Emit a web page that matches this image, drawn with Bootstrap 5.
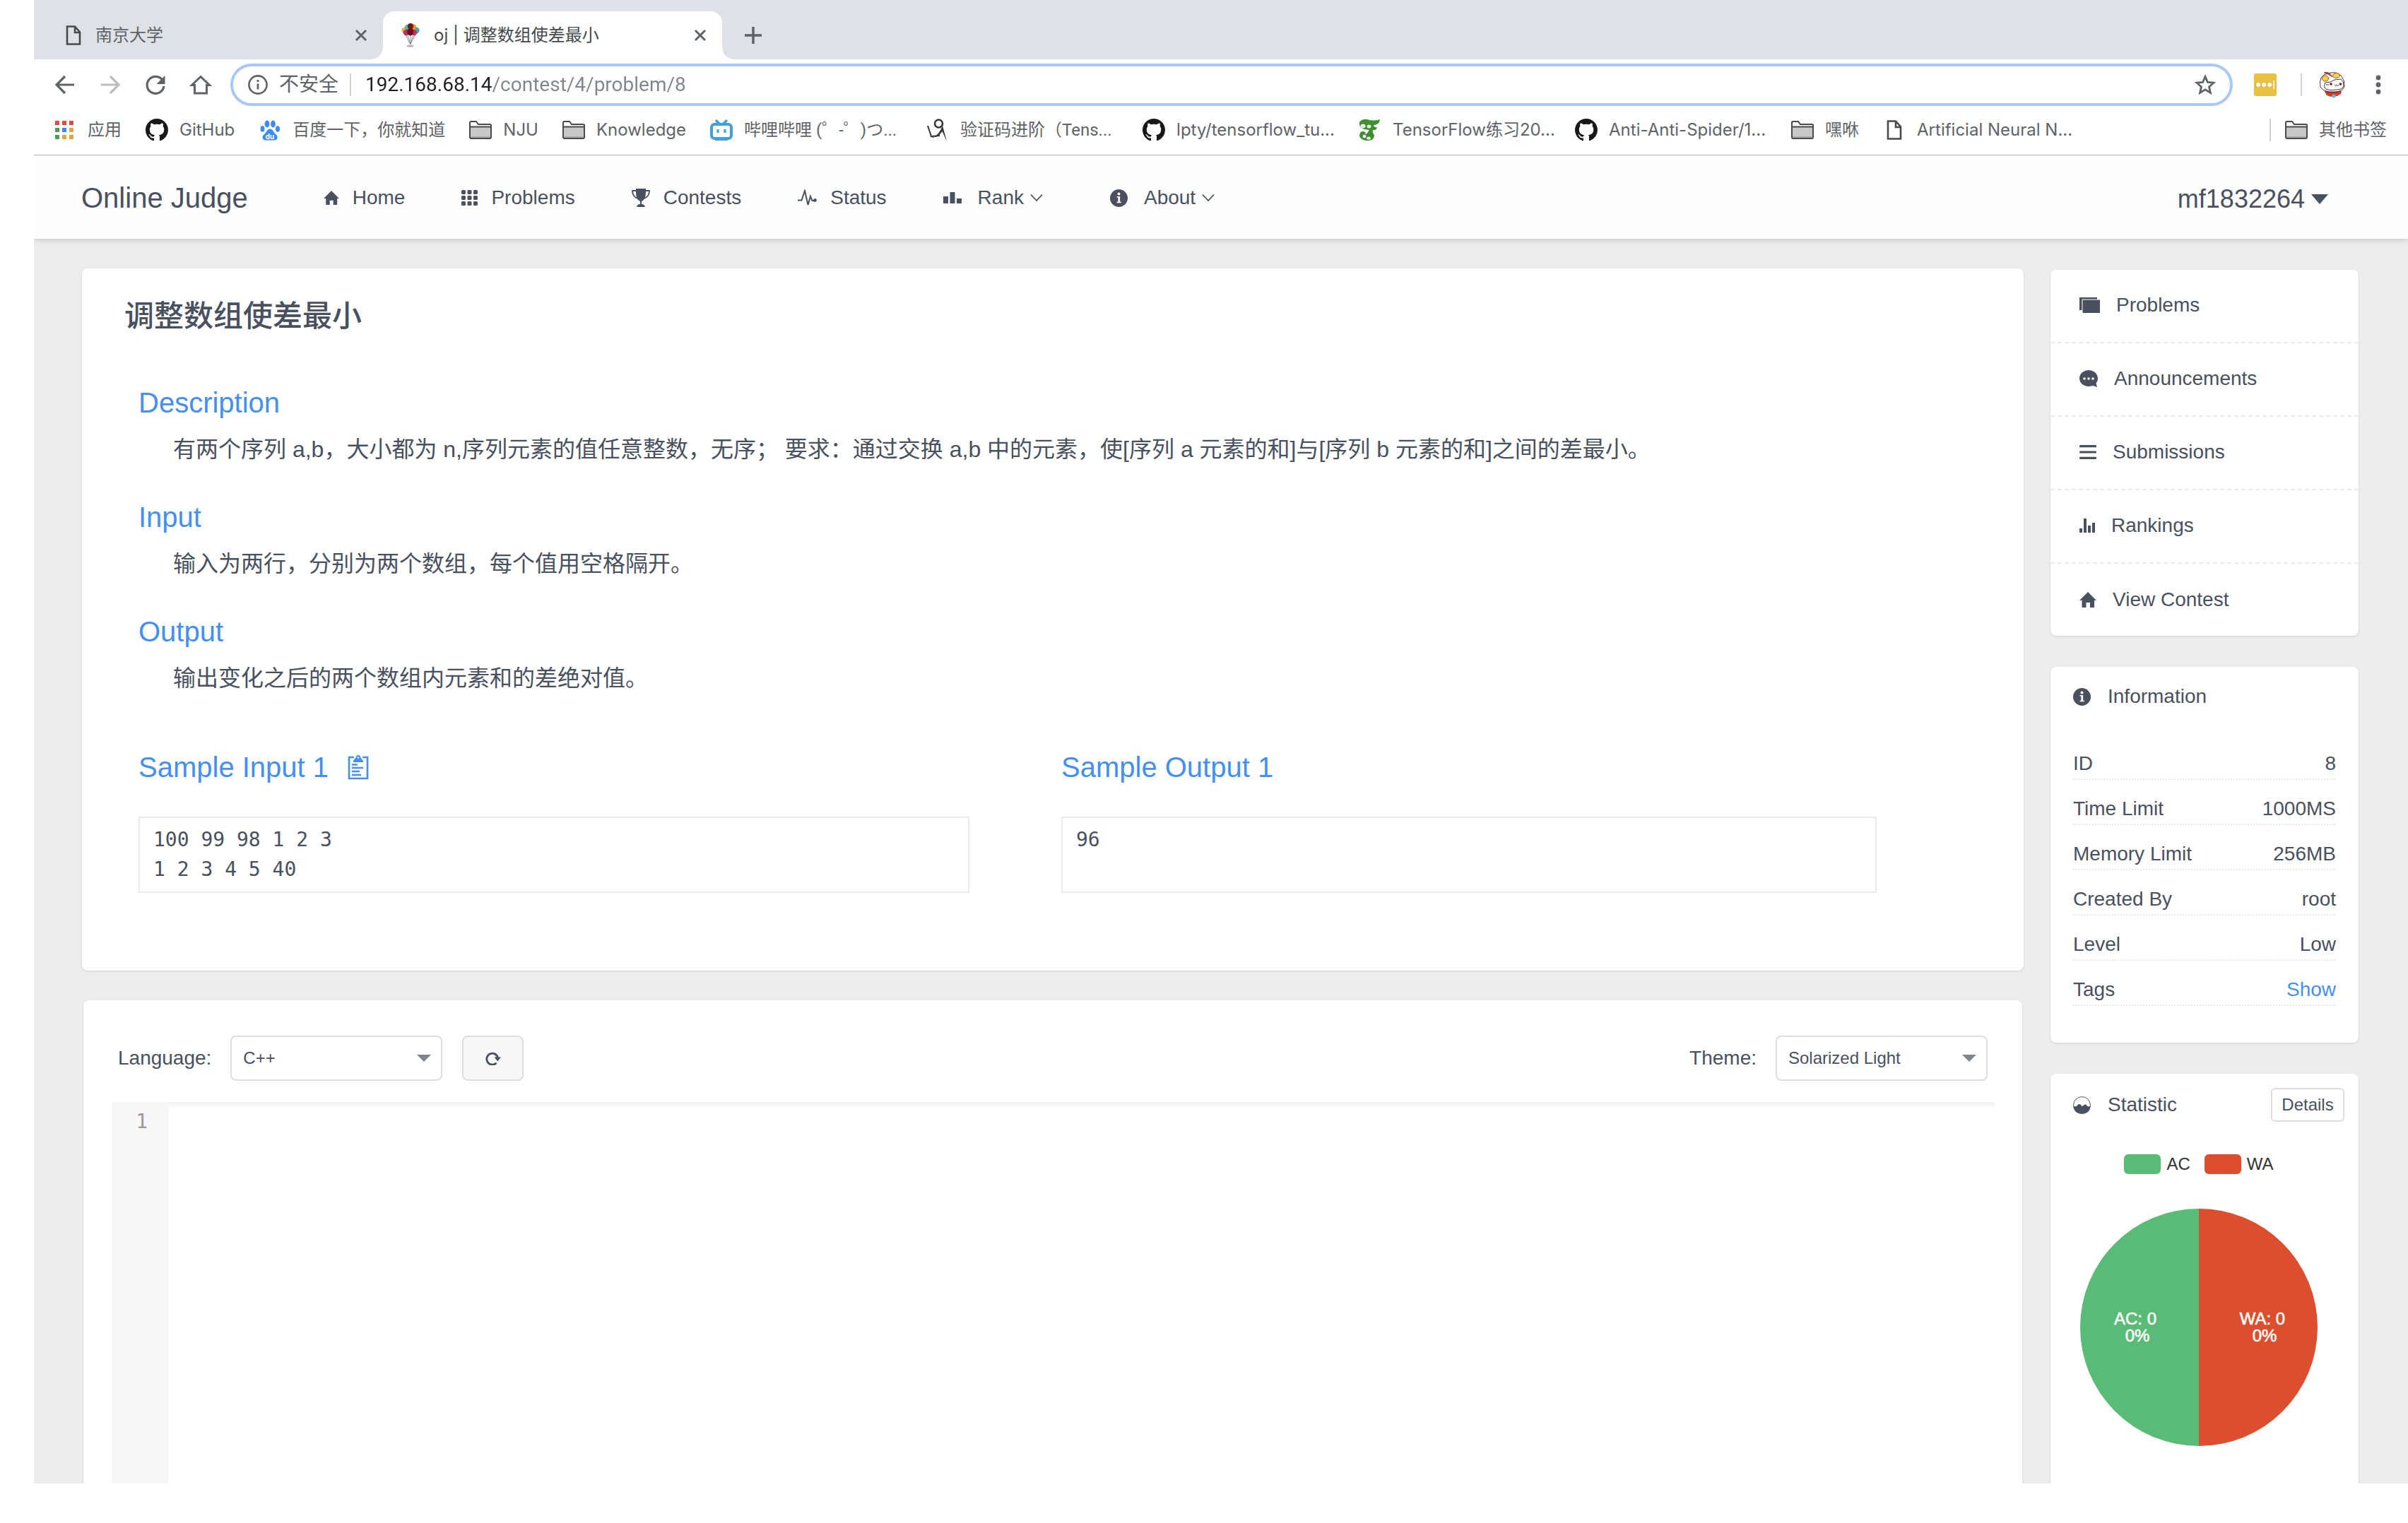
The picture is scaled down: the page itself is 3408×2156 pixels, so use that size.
<!DOCTYPE html>
<html lang="zh-CN">
<head>
<meta charset="utf-8">
<meta name="viewport" content="width=device-width, initial-scale=1">
<title>oj | 调整数组使差最小</title>
<link rel="stylesheet" href="https://cdn.jsdelivr.net/npm/bootstrap@5.3.0/dist/css/bootstrap.min.css">
<style>
  :root { --ink: #495060; --blue: #448ff0; --line: #e9eaec; --chrome: #5f6368; }
  body { font-family: "Liberation Sans", "Noto Sans CJK SC", sans-serif; font-size: 28px; line-height: 42px; color: var(--ink); background: #fff; }
  a, a:hover { color: inherit; text-decoration: none; }
  svg { display: block; flex: none; }
  .shell { height: calc(100vh - 56px); margin-left: 48px; overflow: hidden; }

  /* browser frame */
  .chrome-ui { font-family: Roboto, "Noto Sans CJK SC", sans-serif; color: var(--chrome); }
  .chrome-ui button, .app button { background: none; border: 0; padding: 0; color: inherit; }
  .tabstrip { height: 84px; background: #dee1e6; padding-top: 16px; font-size: 24px; line-height: 36px; }
  .tab-item { height: 68px; padding: 0 22px 0 26px; gap: 20px; }
  .tab-idle { width: 494px; padding-left: 45px; }
  .tab-live { width: 480px; background: #fff; border-radius: 16px 16px 0 0; position: relative; color: #45494d; }
  .tab-live::before, .tab-live::after { content: ""; position: absolute; bottom: 0; width: 16px; height: 16px; }
  .tab-live::before { left: -16px; background: radial-gradient(circle at 0 0, transparent 15px, #fff 16px); }
  .tab-live::after { right: -16px; background: radial-gradient(circle at 100% 0, transparent 15px, #fff 16px); }
  .toolbar { height: 72px; padding: 0 38px 0 28px; }
  .tool-keys { gap: 32px; margin-right: 26px; }
  .omnibox { height: 60px; border: 4px solid #a8c7fa; border-radius: 30px; padding: 0 20px 0 21px; }
  .omnibox input { border: 0; outline: 0; padding: 0; min-width: 0; color: transparent;
    background: linear-gradient(90deg, #202124 179px, #80868b 179px); -webkit-background-clip: text; background-clip: text; }
  .vrule { width: 2px; height: 32px; background: #cfd1d4; flex: none; }
  .tool-menu { margin-left: 42px; }
  .bookmarks { height: 64px; padding: 0 30px 7px 28px; border-bottom: 1px solid #b4b4b4; font-size: 24px; line-height: 36px; gap: 34px; white-space: nowrap; }
  .latin { font-family: Inter, "Noto Sans CJK SC", sans-serif; }
  .bookmarks a, .bookmark-rest { display: flex; align-items: center; gap: 16px; }
  .bookmark-rest { gap: 20px; }
  .clip { width: 224px; }

  /* site header */
  .topnav { height: 118px; background: #fdfdfd; box-shadow: 0 2px 8px rgba(0, 0, 0, .16); padding: 2px 112px 0 67px; position: relative; z-index: 1; }
  .brand { font-size: 40px; line-height: 60px; margin-right: 107px; }
  .topnav nav { gap: 80px; }
  .topnav nav > * { display: flex; align-items: center; gap: 19px; }
  .user-name { font-size: 36px; line-height: 54px; }
  .carets { margin-left: -10px; margin-right: 15px; }

  .app { background: #ededed; }
  .page { padding: 42px 70px 0 68px; gap: 38px; flex: 1; min-height: 0; }
  .pane { background: #fff; border-radius: 8px; box-shadow: 0 1px 3px rgba(0, 0, 0, .12); }
  .pane.pane-open { border-radius: 8px 8px 0 0; }
  .problem { padding: 41px 208px 110px 80px; }
  .problem h1 { font-size: 42px; line-height: 54px; font-weight: 500; margin: 0 0 65px -20px; }
  .problem h2 { font-size: 40px; line-height: 60px; font-weight: 400; color: var(--blue); margin: 0 0 12px; }
  .problem p { font-size: 32px; line-height: 48px; margin: 0 0 42px 49px; }
  .samples { gap: 130px; padding-top: 30px; }
  .samples h2 { margin: 0 0 40px; gap: 27px; }
  .sample-in { flex: 1176 1 0; }
  .sample-out { flex: 1154 1 0; }
  .samples pre { font-family: "DejaVu Sans Mono", monospace; font-size: 28px; line-height: 42px; height: 108px; padding: 10px 19px; border: 2px solid var(--line); margin: 0; color: var(--ink); }

  .coder { margin: 42px 2px 0; padding: 50px 40px 0; flex: 1; min-height: 0; }
  .coder-bar { padding: 0 9px 30px; }
  .coder-bar label { margin-right: 27px; }
  .coder-bar .form-select { width: 300px; height: 64px; border: 2px solid #dddee1; border-radius: 8px; padding: 0 48px 0 16px; font-size: 24px; line-height: 36px; color: var(--ink);
    background: #fff url("data:image/svg+xml,%3Csvg xmlns='http://www.w3.org/2000/svg' viewBox='0 0 20 10'%3E%3Cpath d='M0 0h20L10 10z' fill='%2380848f'/%3E%3C/svg%3E") no-repeat right 14px center / 20px 10px; }
  .coder-bar .btn-reset { width: 87px; height: 64px; border: 2px solid #dddee1; border-radius: 8px; background: #f7f7f7; margin-left: 28px; }
  .code-area { flex: 1; min-height: 0; font-family: "DejaVu Sans Mono", monospace; }
  .gutter { width: 80px; background: #f7f7f7; color: #999; padding: 7px 29px 0 0; text-align: right; }
  .code-area textarea { flex: 1; border: 0; outline: 0; resize: none; padding: 8px; background: linear-gradient(#f1f1f1, #fff 10px); }

  .side { width: 436px; padding-top: 2px; gap: 44px; flex: none; }
  .menu a { display: flex; align-items: center; gap: 23px; height: 104px; padding: 0 41px 2px; border-bottom: 2px dashed var(--line); }
  .menu a:last-child { height: 102px; padding-bottom: 0; border-bottom: 0; }
  .pane-head { gap: 24px; }
  .info { padding: 21px 32px 52px; }
  .info ul { margin-top: 33px; }
  .info li { display: flex; justify-content: space-between; padding-top: 20px; border-bottom: 2px dotted var(--line); }
  .info li a { color: var(--blue); }
  .stat { padding: 20px 20px 0 32px; flex: 1; }
  .app .btn-details { width: 104px; height: 48px; border: 2px solid #dddee1; border-radius: 6px; font-size: 24px; line-height: 36px; }
  .legend-row { margin: 46px 28px 49px 0; font-size: 24px; line-height: 28px; color: #333; gap: 20px; }
  .swatch { width: 52px; height: 28px; border-radius: 6px; }
  .swatch-ac { background: #5abb76; }
  .swatch-wa { background: #dc4e2d; }
  .chart { margin-right: 28px; }
  .chart text { font-size: 24px; fill: #fff; stroke: #fff; stroke-width: .6; text-anchor: middle; }
</style>
<script src="https://cdn.jsdelivr.net/npm/bootstrap@5.3.0/dist/js/bootstrap.bundle.min.js"></script>
</head>
<body>
<svg width="0" height="0" class="position-absolute" aria-hidden="true">
  <symbol id="i-close" viewBox="0 0 18 18"><path d="M2 2l14 14M16 2L2 16" stroke="#5f6368" stroke-width="3" fill="none"/></symbol>
  <symbol id="i-github" viewBox="0 0 16 16"><path fill="#191717" d="M8 0C3.58 0 0 3.58 0 8c0 3.54 2.29 6.53 5.47 7.59.4.07.55-.17.55-.38 0-.19-.01-.82-.01-1.49-2.01.37-2.53-.49-2.69-.94-.09-.23-.48-.94-.82-1.13-.28-.15-.68-.52-.01-.53.63-.01 1.08.58 1.23.82.72 1.21 1.87.87 2.33.66.07-.52.28-.87.51-1.07-1.78-.2-3.64-.89-3.64-3.95 0-.87.31-1.59.82-2.15-.08-.2-.36-1.02.08-2.12 0 0 .67-.21 2.2.82.64-.18 1.32-.27 2-.27s1.36.09 2 .27c1.53-1.04 2.2-.82 2.2-.82.44 1.1.16 1.92.08 2.12.51.56.82 1.27.82 2.15 0 3.07-1.87 3.75-3.65 3.95.29.25.54.73.54 1.48 0 1.07-.01 1.93-.01 2.2 0 .21.15.46.55.38A8.01 8.01 0 0 0 16 8c0-4.42-3.58-8-8-8z"/></symbol>
  <symbol id="i-folder" viewBox="0 0 32 26"><path d="M1 23V2.500Q1 1 2.500 1H10l3 4h16.500Q31 5 31 6.500V23q0 2-2 2H3q-2 0-2-2z" fill="#fff" stroke="#4a4a4a" stroke-width="2"/><path d="M2 9h28v15H2z" fill="#c8c8c8"/><path d="M2 22h28v2H2z" fill="#aaa"/><path d="M1 8.500h30" stroke="#4a4a4a" stroke-width="2"/></symbol>
  <symbol id="i-doc" viewBox="0 0 22 28"><path d="M2 1.500h11l7 8V26.500H2zM13 2v8h7" fill="none" stroke="#4a4a4a" stroke-width="2.600"/></symbol>
  <symbol id="i-home" viewBox="0 0 24 22"><path d="M12 0l12 12h-3v10h-6v-7H9.500v7H3.500V12H0z" fill="#495060"/></symbol>
  <symbol id="i-info" viewBox="0 0 26 26"><circle cx="13" cy="13" r="13" fill="#495060"/><circle cx="13" cy="6.800" r="2.100" fill="#fff"/><path d="M10 10.500h4.700v8H16.500V20H10v-1.500h1.800v-6.500H10z" fill="#fff"/></symbol>
  <symbol id="i-chev" viewBox="0 0 18 12"><path d="M1 1.500l8 8.500 8-8.500" fill="none" stroke="#495060" stroke-width="1.800"/></symbol>
</svg>

<div class="shell d-flex flex-column">
  <header class="chrome-ui">
    <div class="tabstrip d-flex">
      <div class="tab-item tab-idle d-flex align-items-center">
        <svg width="22" height="28"><use href="#i-doc"/></svg>
        <span class="me-auto">南京大学</span>
        <button type="button" aria-label="关闭"><svg width="18" height="18"><use href="#i-close"/></svg></button>
      </div>
      <div class="tab-item tab-live d-flex align-items-center">
        <svg width="26" height="34" viewBox="0 0 26 34"><path d="M5 14l7 15M21 14l-8 15M13 16v14M9 17l4 12M17 17l-4 12" stroke="#777" stroke-width=".8" fill="none"/><ellipse cx="12.500" cy="32" rx="5" ry="1.800" fill="#bbb"/><circle cx="5" cy="10" r="4.600" fill="#e0b64a"/><circle cx="21" cy="10" r="4.600" fill="#36b0a0"/><circle cx="9" cy="6" r="4.200" fill="#4bb7a7"/><circle cx="17" cy="5.500" r="4.200" fill="#c9a13a"/><circle cx="13" cy="4" r="4" fill="#7a1518"/><circle cx="7" cy="13" r="4.200" fill="#b82a78"/><circle cx="18" cy="13" r="4.200" fill="#c02f6c"/><ellipse cx="12.800" cy="12" rx="4.600" ry="5.400" fill="#6e1013"/></svg>
        <span class="me-auto latin">oj | 调整数组使差最小</span>
        <button type="button" aria-label="关闭"><svg width="18" height="18"><use href="#i-close"/></svg></button>
      </div>
      <button type="button" class="ms-4 ps-2" aria-label="新标签页"><svg width="24" height="24" viewBox="0 0 24 24"><path d="M12 0v24M0 12h24" stroke="#5f6368" stroke-width="3.500"/></svg></button>
    </div>

    <div class="toolbar d-flex align-items-center">
      <div class="tool-keys d-flex">
        <button type="button" aria-label="后退"><svg width="32" height="32" viewBox="0 0 32 32"><path d="M29 16H5M16 4L4 16l12 12" fill="none" stroke="#5f6368" stroke-width="3.200"/></svg></button>
        <button type="button" aria-label="前进"><svg width="32" height="32" viewBox="0 0 32 32"><path d="M3 16h24M16 4l12 12-12 12" fill="none" stroke="#babcbe" stroke-width="3.200"/></svg></button>
        <button type="button" aria-label="重新加载"><svg width="32" height="32" viewBox="0 0 32 32"><path d="M26 9.500A12 12 0 1 0 28 18" fill="none" stroke="#5f6368" stroke-width="3.200"/><path d="M29.500 3v12h-12z" fill="#5f6368"/></svg></button>
        <button type="button" aria-label="主页"><svg width="32" height="32" viewBox="0 0 32 32"><path d="M3.500 16.500L16 4.500l12.500 12h-4V28h-17V16.500z" fill="none" stroke="#5f6368" stroke-width="3"/></svg></button>
      </div>
      <div class="omnibox d-flex align-items-center flex-grow-1">
        <svg width="28" height="28" viewBox="0 0 28 28"><circle cx="14" cy="14" r="12.600" fill="none" stroke="#5f6368" stroke-width="2.600"/><path d="M14 12.500v8M14 7v3" stroke="#5f6368" stroke-width="2.800"/></svg>
        <span class="ms-3">不安全</span>
        <span class="vrule ms-3 me-3"></span>
        <input class="flex-grow-1 ms-1" type="text" aria-label="地址" value="192.168.68.14/contest/4/problem/8">
        <svg width="30" height="30" viewBox="0 0 30 30"><path d="M15 3.500l3.400 7.900 8.500.8-6.400 5.700 1.900 8.400-7.400-4.400-7.400 4.400 1.900-8.400-6.400-5.700 8.500-.8z" fill="none" stroke="#5f6368" stroke-width="2.800"/></svg>
      </div>
      <svg class="ms-4 me-2" width="40" height="32" viewBox="-3 0 40 32"><rect x="3" width="32" height="32" rx="3" fill="#e8c142"/><circle cx="9.300" cy="16" r="2.900" fill="#fff"/><circle cx="17.300" cy="16" r="2.900" fill="#fff"/><circle cx="25.300" cy="16" r="2.900" fill="#fff"/><path d="M31.200 10v12" stroke="#fff" stroke-width="1.500"/></svg>
      <span class="vrule ms-4 me-4"></span>
      <svg width="38" height="38" viewBox="0 0 38 38"><path d="M8 29l24-1-1 4q-10 7-20 2z" fill="#d8392e"/><path d="M2 22Q-1 6 12 3q14-4 20 4 5 7 4 14-2 8-14 8Q6 30 2 22z" fill="#fff" stroke="#59322f"/><path d="M7 2q7-3 12 6-5-4-12-6z" fill="#d8392e" stroke="#59322f" stroke-width=".7"/><ellipse cx="9" cy="10" rx="4.500" ry="4" fill="#f7cf49" stroke="#8a5f25"/><ellipse cx="24.500" cy="6" rx="5" ry="3.500" fill="#f7cf49" stroke="#8a5f25"/><path d="M9 16q8 0 13-4l9-1q5 4 4 9-1 6-10 6-15 2-17-3-1-4 1-7z" fill="#fff" stroke="#59322f"/><circle cx="17" cy="18" r="1.800" fill="#5a1c1c"/><circle cx="30.500" cy="18" r="1.800" fill="#5a1c1c"/><path d="M10 19h4M22 19q1.500 3 3 0 1.500 3 3 0M8 28q10 4 22 0" fill="none" stroke="#59322f"/><circle cx="21" cy="35" r="2.500" fill="#4fc6d2"/></svg>
      <button type="button" class="tool-menu" aria-label="菜单"><svg width="8" height="28" viewBox="0 0 8 28"><circle cx="4" cy="4" r="3.400" fill="#5f6368"/><circle cx="4" cy="14" r="3.400" fill="#5f6368"/><circle cx="4" cy="24" r="3.400" fill="#5f6368"/></svg></button>
    </div>

    <div class="bookmarks d-flex align-items-center">
      <a href="#"><svg width="32" height="32" viewBox="0 0 32 32"><path d="M2 3h6v6H2zM12 3h6v6h-6zM22 3h6v6h-6z" fill="#e04a3f"/><path d="M2 13h6v6H2zM2 23h6v6H2z" fill="#4f9a52"/><path d="M12 13h6v6h-6z" fill="#4285f4"/><path d="M22 13h6v6h-6zM12 23h6v6h-6zM22 23h6v6h-6z" fill="#e6a23c"/></svg>应用</a>
      <a href="#" class="latin"><svg width="32" height="32"><use href="#i-github"/></svg>GitHub</a>
      <a href="#"><svg width="32" height="32" viewBox="0 0 32 32"><g fill="#3d8af7"><ellipse cx="12" cy="7.500" rx="3.400" ry="5"/><ellipse cx="20.500" cy="7.500" rx="3.400" ry="5"/><ellipse cx="5.500" cy="14.500" rx="3" ry="4.300"/><ellipse cx="27" cy="14.500" rx="3" ry="4.300"/><path d="M16 14.500q3 0 5 3.500t4 4.800q2.500 2.200 1.200 5.700-1 2-4 2H10q-3 0-4-2-1.300-3.500 1.200-5.700 2-1.300 4-4.800t4.800-3.500z"/></g><text x="16" y="28.500" font-size="11" font-weight="700" fill="#fff" text-anchor="middle">du</text></svg>百度一下，你就知道</a>
      <a href="#" class="latin"><svg width="32" height="26"><use href="#i-folder"/></svg>NJU</a>
      <a href="#" class="latin"><svg width="32" height="26"><use href="#i-folder"/></svg>Knowledge</a>
      <a href="#"><svg width="32" height="32" viewBox="0 0 32 32"><path d="M9 3l4 4M23 3l-4 4" stroke="#42a1d6" stroke-width="3.500" stroke-linecap="round"/><rect x="2" y="8" width="28" height="20" rx="4" fill="#fff" stroke="#42a1d6" stroke-width="4"/><path d="M11 15v5M21 15v5" stroke="#42a1d6" stroke-width="3.200"/><path d="M7 30h18" stroke="#42a1d6" stroke-width="2"/></svg><span class="clip">哔哩哔哩 (゜-゜)つ...</span></a>
      <a href="#"><svg width="32" height="32" viewBox="0 0 32 32"><circle cx="17.500" cy="7" r="5.500" fill="none" stroke="#3b3635" stroke-width="2.600"/><path d="M2 10l5 15 12-1" fill="none" stroke="#3b3635" stroke-width="2"/><path d="M4 25l6 2q9-6 13-17l6 22-6.500-14q-4 6-9 8z" fill="#3b3635"/></svg><span class="clip">验证码进阶（Tens...</span></a>
      <a href="#" class="latin"><svg width="32" height="32"><use href="#i-github"/></svg><span class="clip">lpty/tensorflow_tu...</span></a>
      <a href="#"><svg width="32" height="32" viewBox="0 0 32 32"><path d="M1 5Q5 0 12 1q9 3 18 0-1 8-9 8 1 4 5 3-1 5-6 4-1 4 2 7 0 8-9 8-9 0-12-6 0-8 6-7 4 1 2 5 4-3 6-7l-7-1Q0 13 1 5z" fill="#3f8f2f"/><ellipse cx="6" cy="10.500" rx="3.600" ry="3" fill="#e8ebe6"/><ellipse cx="14.500" cy="11" rx="3" ry="2.500" fill="#e8ebe6"/><circle cx="8" cy="25" r="2.600" fill="#fff" stroke="#7a877a" stroke-width="1"/><ellipse cx="14" cy="27.500" rx="3" ry="2" fill="#e8ebe6"/></svg><span class="clip latin">TensorFlow练习20...</span></a>
      <a href="#" class="latin"><svg width="32" height="32"><use href="#i-github"/></svg><span class="clip">Anti-Anti-Spider/1...</span></a>
      <a href="#"><svg width="32" height="26"><use href="#i-folder"/></svg>嘿咻</a>
      <a href="#" class="latin"><svg width="32" height="28"><use href="#i-doc"/></svg>Artificial Neural N...</a>
      <div class="bookmark-rest ms-auto">
        <span class="vrule"></span>
        <a href="#"><svg width="32" height="26"><use href="#i-folder"/></svg>其他书签</a>
      </div>
    </div>
  </header>

  <div class="app d-flex flex-column flex-grow-1 overflow-hidden">
    <div class="topnav d-flex align-items-center flex-shrink-0">
      <a href="#" class="brand">Online Judge</a>
      <nav class="d-flex align-items-center">
        <a href="#"><svg width="22" height="20"><use href="#i-home"/></svg>Home</a>
        <a href="#"><svg width="23" height="22" viewBox="0 0 23 22"><g fill="#495060"><rect width="6" height="6" rx="1.500"/><rect x="8.500" width="6" height="6" rx="1.500"/><rect x="17" width="6" height="6" rx="1.500"/><rect y="8" width="6" height="6" rx="1.500"/><rect x="8.500" y="8" width="6" height="6" rx="1.500"/><rect x="17" y="8" width="6" height="6" rx="1.500"/><rect y="16" width="6" height="6" rx="1.500"/><rect x="8.500" y="16" width="6" height="6" rx="1.500"/><rect x="17" y="16" width="6" height="6" rx="1.500"/></g></svg>Problems</a>
        <a href="#"><svg width="26" height="26" viewBox="0 0 26 26"><path d="M6 0h14v2h6q0 10-8.500 13-1 2-3.500 3v4q4 0 5 4H7q1-4 5-4v-4q-2.500-1-3.500-3Q0 12 0 2h6zM2 4q.5 6 5 8.500Q6 9 6 4zM24 4h-4q0 5-1 8.500Q23.500 10 24 4z" fill="#495060" fill-rule="evenodd"/></svg>Contests</a>
        <a href="#"><svg width="27" height="24" viewBox="0 0 27 24"><path d="M0 15.500h5.500L10 2l4.500 20L18 10l2.500 6H24" fill="none" stroke="#495060" stroke-width="2"/><circle cx="24.500" cy="15.500" r="2.400" fill="#495060"/></svg>Status</a>
        <a href="#"><svg class="me-1" width="26" height="16" viewBox="0 0 26 16"><path d="M0 6h7v10H0zM9.500 0h7v16h-7zM19 9h7v7h-7z" fill="#495060"/></svg>Rank<svg class="carets" width="18" height="12"><use href="#i-chev"/></svg></a>
        <a href="#"><svg class="me-1" width="25" height="25"><use href="#i-info"/></svg>About<svg class="carets" width="18" height="12"><use href="#i-chev"/></svg></a>
      </nav>
      <button type="button" class="user-name ms-auto mt-1 d-flex align-items-center gap-2">mf1832264<svg width="26" height="14" viewBox="0 0 26 14"><path d="M1 0h24L13 14z" fill="#495060"/></svg></button>
    </div>

    <div class="page d-flex">
      <main class="d-flex flex-column flex-grow-1">
        <article class="pane problem">
          <h1>调整数组使差最小</h1>
          <h2>Description</h2>
          <p>有两个序列 a,b，大小都为 n,序列元素的值任意整数，无序； 要求：通过交换 a,b 中的元素，使[序列 a 元素的和]与[序列 b 元素的和]之间的差最小。</p>
          <h2>Input</h2>
          <p>输入为两行，分别为两个数组，每个值用空格隔开。</p>
          <h2>Output</h2>
          <p>输出变化之后的两个数组内元素和的差绝对值。</p>
          <div class="samples d-flex">
            <section class="sample-in">
              <h2 class="d-flex align-items-center">Sample Input 1
                <button type="button" aria-label="Copy"><svg width="30" height="36" viewBox="0 0 30 36"><path d="M9 4H2v30h26V4h-7" fill="none" stroke="#448ff0" stroke-width="2.600"/><path d="M12 4a3 3 0 0 1 6 0l4 5v2H8V9z" fill="#448ff0"/><circle cx="15" cy="4.500" r="1.200" fill="#fff"/><path d="M6 14.500h8M6 19h16M6 24h11M6 29h13" stroke="#448ff0" stroke-width="2.400"/></svg></button>
              </h2>
              <pre>100 99 98 1 2 3
1 2 3 4 5 40</pre>
            </section>
            <section class="sample-out">
              <h2>Sample Output 1</h2>
              <pre>96</pre>
            </section>
          </div>
        </article>

        <section class="pane pane-open coder d-flex flex-column">
          <div class="coder-bar d-flex align-items-center">
            <label for="lang">Language:</label>
            <select id="lang" class="form-select"><option>C++</option></select>
            <button type="button" class="btn-reset d-flex align-items-center justify-content-center" aria-label="Reset"><svg width="22" height="20" viewBox="0 0 22 20"><path d="M15.500 16.800A8 8 0 1 1 17.500 9" fill="none" stroke="#495060" stroke-width="2.800"/><path d="M12.500 8.500H22l-4.700 6z" fill="#495060"/></svg></button>
            <label for="theme" class="ms-auto">Theme:</label>
            <select id="theme" class="form-select"><option>Solarized Light</option></select>
          </div>
          <div class="code-area d-flex">
            <div class="gutter">1</div>
            <textarea aria-label="Code"></textarea>
          </div>
        </section>
      </main>

      <aside class="side d-flex flex-column">
        <div class="pane menu">
          <a href="#"><svg width="29" height="22" viewBox="0 0 29 22"><path d="M0 0h25v2.500H3.500V18H0z" fill="#495060"/><path d="M4.500 3.500H29V22H4.500z" fill="#495060"/></svg>Problems</a>
          <a href="#"><svg width="26" height="24" viewBox="0 0 26 24"><path d="M13 0c7 0 13 5 13 11.500 0 3-1 5-2.500 7L25 24l-6-2q-3 1-6 1C5.500 23 0 18 0 11.500S6 0 13 0z" fill="#495060"/><circle cx="7" cy="12" r="1.800" fill="#fff"/><circle cx="13" cy="12" r="1.800" fill="#fff"/><circle cx="19" cy="12" r="1.800" fill="#fff"/></svg>Announcements</a>
          <a href="#"><svg width="24" height="20" viewBox="0 0 24 20"><path d="M1.500 1.700h21M1.500 10h21M1.500 18.300h21" stroke="#495060" stroke-width="3.200" stroke-linecap="round"/></svg>Submissions</a>
          <a href="#"><svg width="22" height="20" viewBox="0 0 22 20"><path d="M0 14h4v6H0zM6 0h4v20H6zM12 10h4v10h-4zM18 6h4v14h-4z" fill="#495060"/></svg>Rankings</a>
          <a href="#"><svg width="24" height="22"><use href="#i-home"/></svg>View Contest</a>
        </div>

        <div class="pane info">
          <div class="pane-head d-flex align-items-center"><svg width="25" height="25"><use href="#i-info"/></svg>Information</div>
          <ul class="list-unstyled mb-0">
            <li><span>ID</span><span>8</span></li>
            <li><span>Time Limit</span><span>1000MS</span></li>
            <li><span>Memory Limit</span><span>256MB</span></li>
            <li><span>Created By</span><span>root</span></li>
            <li><span>Level</span><span>Low</span></li>
            <li><span>Tags</span><a href="#">Show</a></li>
          </ul>
        </div>

        <div class="pane pane-open stat">
          <div class="pane-head d-flex align-items-center">
            <svg width="25" height="25" viewBox="0 0 26 26"><circle cx="13" cy="13" r="12.400" fill="#fff" stroke="#495060"/><path d="M.5 14q3 2 5 0 4-5 7 0 1 1 2 0 4-4 6 0 2 2 5 0Q25 25.500 13 25.500T.5 14z" fill="#495060"/></svg>
            <span class="me-auto">Statistic</span>
            <button type="button" class="btn-details">Details</button>
          </div>
          <div class="legend-row d-flex justify-content-center align-items-center">
            <span class="d-flex gap-2"><span class="swatch swatch-ac"></span>AC</span>
            <span class="d-flex gap-2"><span class="swatch swatch-wa"></span>WA</span>
          </div>
          <div class="chart d-flex justify-content-center">
            <svg width="336" height="336" viewBox="0 0 336 336" role="img" aria-label="AC 0%, WA 0%">
              <path d="M168 0a168 168 0 0 0 0 336z" fill="#5abb76"/><path d="M168 0a168 168 0 0 1 0 336z" fill="#dc4e2d"/>
              <text x="78" y="164">AC: 0</text><text x="81" y="188">0%</text>
              <text x="258" y="164">WA: 0</text><text x="261" y="188">0%</text>
            </svg>
          </div>
        </div>
      </aside>
    </div>
  </div>
</div>
</body>
</html>
